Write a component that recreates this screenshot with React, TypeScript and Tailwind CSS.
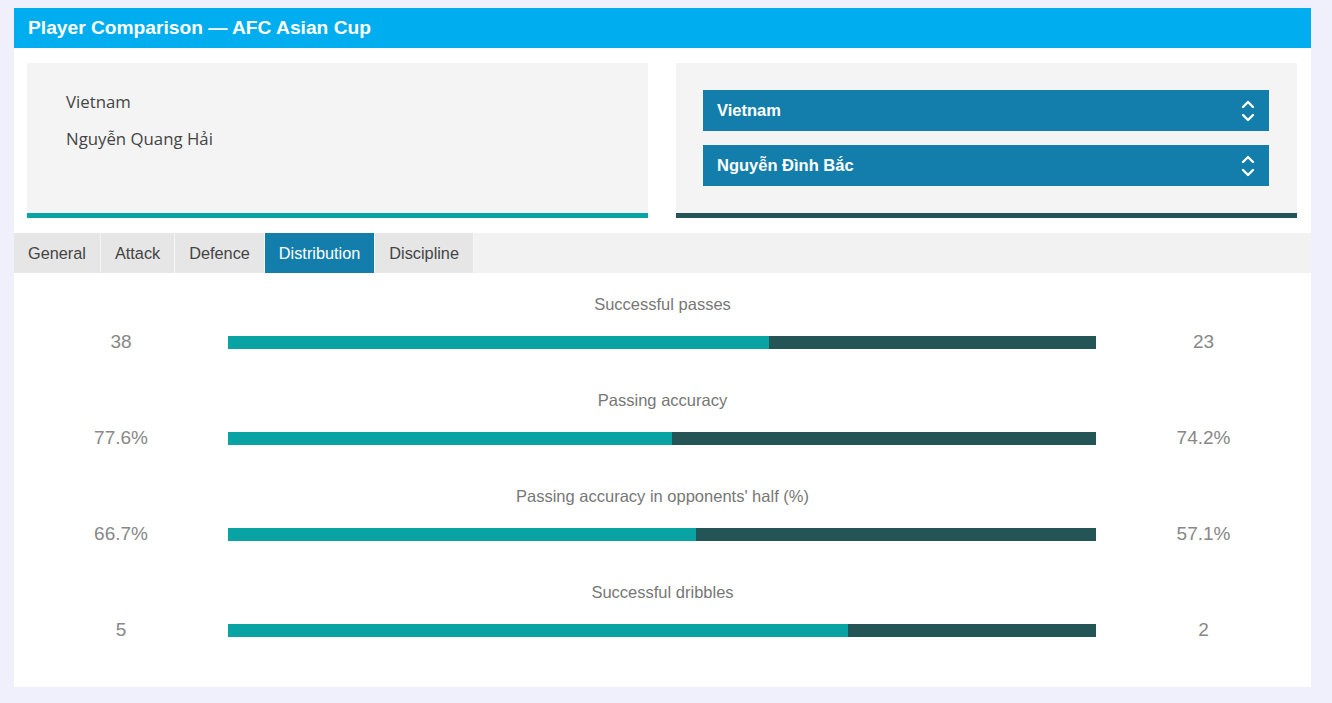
const stats = [
  { label: 'Successful passes', left: '38', right: '23', a: 38, b: 23 },
  { label: 'Passing accuracy', left: '77.6%', right: '74.2%', a: 77.6, b: 74.2 },
  { label: "Passing accuracy in opponents' half (%)", left: '66.7%', right: '57.1%', a: 66.7, b: 57.1 },
  { label: 'Successful dribbles', left: '5', right: '2', a: 5, b: 2 },
];

const tabs = ['General', 'Attack', 'Defence', 'Distribution', 'Discipline'];

function Arrows() {
  return (
    <svg width="14" height="24" viewBox="0 0 14 24" fill="none" stroke="white" strokeWidth="2.4" strokeLinecap="round" strokeLinejoin="round">
      <polyline points="2,8 7,3 12,8" />
      <polyline points="2,16 7,21 12,16" />
    </svg>
  );
}

function Select({ value }: { value: string }) {
  return (
    <div className="flex h-[41px] items-center justify-between bg-[#137eab] pl-[14px] pr-[14px] text-white">
      <span className="text-[16.5px] font-bold">{value}</span>
      <Arrows />
    </div>
  );
}

export default function App() {
  return (
    <div className="min-h-[703px] w-[1332px] bg-[#f0effc] pt-[8px] pb-[16px] pl-[14px] pr-[21px] font-['Liberation_Sans',Arial,sans-serif]">
      <div className="bg-white">
        {/* Header */}
        <div className="flex h-[40px] items-center bg-[#00aeef] px-[14px]">
          <h1 className="text-[19.2px] font-bold text-white">Player Comparison — AFC Asian Cup</h1>
        </div>

        {/* Players */}
        <div className="grid grid-cols-[621px_621px] gap-[28px] px-[13px] pt-[15px]">
          <div className="h-[155px] border-b-[5px] border-[#0aa3a3] bg-[#f4f4f4] pl-[39px] pt-[28px] font-['Open_Sans',sans-serif] text-[16.8px] text-[#444]">
            <div className="leading-[22px]">Vietnam</div>
            <div className="mt-[15px] leading-[22px]">Nguyễn Quang Hải</div>
          </div>
          <div className="flex h-[155px] flex-col gap-[14px] border-b-[5px] border-[#235557] bg-[#f4f4f4] pl-[27px] pr-[28px] pt-[27px]">
            <Select value="Vietnam" />
            <Select value="Nguyễn Đình Bắc" />
          </div>
        </div>

        {/* Tabs */}
        <div className="mt-[15px] flex h-[40px] bg-[#f2f2f2]">
          {tabs.map((t) => (
            <div
              key={t}
              className={`flex items-center border-r border-[#f6f6f6] px-[14px] text-[16.3px] ${
                t === 'Distribution' ? 'bg-[#137eab] text-white' : 'bg-[#e6e6e6] text-[#444]'
              }`}
            >
              {t}
            </div>
          ))}
        </div>

        {/* Stats */}
        <div className="pt-[21px] pb-[47px]">
          {stats.map((s, i) => {
            const pct = (s.a / (s.a + s.b)) * 100;
            return (
              <div key={s.label} className={i > 0 ? 'mt-[38px]' : ''}>
                <div className="h-[20px] text-center text-[16.5px] leading-[20px] text-[#777]">{s.label}</div>
                <div className="mt-[18px] flex h-[20px] items-center">
                  <div className="w-[214px] text-center text-[19px] text-[#888]">{s.left}</div>
                  <div className="flex h-[13px] flex-1 bg-[#235557]">
                    <div className="h-full bg-[#09a3a3]" style={{ width: `${pct}%` }} />
                  </div>
                  <div className="w-[215px] text-center text-[19px] text-[#888]">{s.right}</div>
                </div>
              </div>
            );
          })}
        </div>
      </div>
    </div>
  );
}
